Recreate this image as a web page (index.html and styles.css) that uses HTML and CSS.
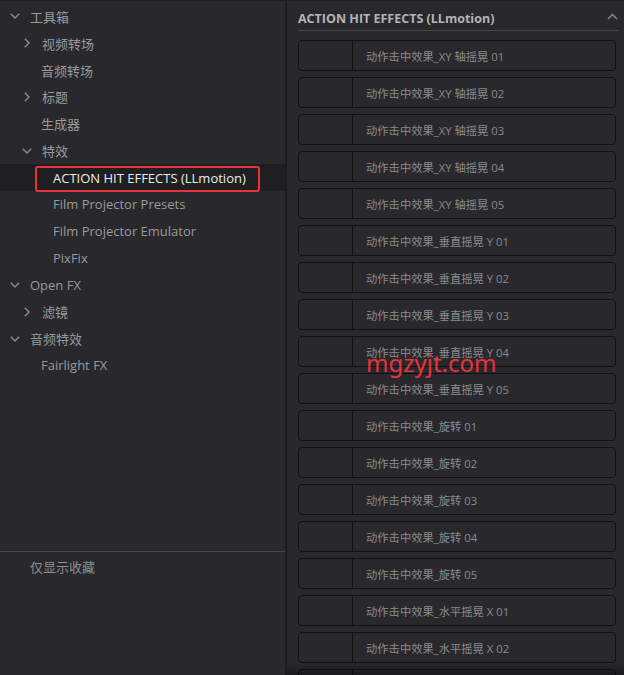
FILE: index.html
```html
<!DOCTYPE html>
<html lang="zh-CN">
<head>
<meta charset="utf-8">
<title>Effects Library</title>
<link rel="stylesheet" href="styles.css">
</head>
<body>
<div class="app">
  <aside class="side">
    <div class="tree">
      <div class="row l0"><span class="chev"><svg width="10" height="6" viewBox="0 0 10 6"><polyline points="0.8,0.8 5,5 9.2,0.8" /></svg></span><span class="label">工具箱</span></div>
      <div class="row l1"><span class="chev"><svg width="6" height="10" viewBox="0 0 6 10"><polyline points="0.8,0.8 5,5 0.8,9.2" /></svg></span><span class="label">视频转场</span></div>
      <div class="row leaf1"><span class="label">音频转场</span></div>
      <div class="row l1"><span class="chev"><svg width="6" height="10" viewBox="0 0 6 10"><polyline points="0.8,0.8 5,5 0.8,9.2" /></svg></span><span class="label">标题</span></div>
      <div class="row leaf1"><span class="label">生成器</span></div>
      <div class="row l1"><span class="chev"><svg width="10" height="6" viewBox="0 0 10 6"><polyline points="0.8,0.8 5,5 9.2,0.8" /></svg></span><span class="label">特效</span></div>
      <div class="row sel"><span class="label hl">ACTION HIT EFFECTS (LLmotion)</span></div>
      <div class="row l2"><span class="label">Film Projector Presets</span></div>
      <div class="row l2"><span class="label">Film Projector Emulator</span></div>
      <div class="row l2"><span class="label">PixFix</span></div>
      <div class="row l0"><span class="chev"><svg width="10" height="6" viewBox="0 0 10 6"><polyline points="0.8,0.8 5,5 9.2,0.8" /></svg></span><span class="label">Open FX</span></div>
      <div class="row l1"><span class="chev"><svg width="6" height="10" viewBox="0 0 6 10"><polyline points="0.8,0.8 5,5 0.8,9.2" /></svg></span><span class="label">滤镜</span></div>
      <div class="row l0"><span class="chev"><svg width="10" height="6" viewBox="0 0 10 6"><polyline points="0.8,0.8 5,5 9.2,0.8" /></svg></span><span class="label">音频特效</span></div>
      <div class="row leaf1"><span class="label">Fairlight FX</span></div>
    </div>
    <div class="foot"><span class="label">仅显示收藏</span></div>
  </aside>
  <div class="divider"></div>
  <main class="content">
    <div class="head">
      <span class="title">ACTION HIT EFFECTS (LLmotion)</span>
      <svg class="up" width="11" height="7" viewBox="0 0 11 7"><polyline points="1,6 5.5,1.5 10,6" /></svg>
    </div>
    <div class="list">
      <div class="card"><div class="thumb"></div><div class="name">动作击中效果_XY 轴摇晃 01</div></div>
      <div class="card"><div class="thumb"></div><div class="name">动作击中效果_XY 轴摇晃 02</div></div>
      <div class="card"><div class="thumb"></div><div class="name">动作击中效果_XY 轴摇晃 03</div></div>
      <div class="card"><div class="thumb"></div><div class="name">动作击中效果_XY 轴摇晃 04</div></div>
      <div class="card"><div class="thumb"></div><div class="name">动作击中效果_XY 轴摇晃 05</div></div>
      <div class="card"><div class="thumb"></div><div class="name">动作击中效果_垂直摇晃 Y 01</div></div>
      <div class="card"><div class="thumb"></div><div class="name">动作击中效果_垂直摇晃 Y 02</div></div>
      <div class="card"><div class="thumb"></div><div class="name">动作击中效果_垂直摇晃 Y 03</div></div>
      <div class="card"><div class="thumb"></div><div class="name">动作击中效果_垂直摇晃 Y 04</div></div>
      <div class="card"><div class="thumb"></div><div class="name">动作击中效果_垂直摇晃 Y 05</div></div>
      <div class="card"><div class="thumb"></div><div class="name">动作击中效果_旋转 01</div></div>
      <div class="card"><div class="thumb"></div><div class="name">动作击中效果_旋转 02</div></div>
      <div class="card"><div class="thumb"></div><div class="name">动作击中效果_旋转 03</div></div>
      <div class="card"><div class="thumb"></div><div class="name">动作击中效果_旋转 04</div></div>
      <div class="card"><div class="thumb"></div><div class="name">动作击中效果_旋转 05</div></div>
      <div class="card"><div class="thumb"></div><div class="name">动作击中效果_水平摇晃 X 01</div></div>
      <div class="card"><div class="thumb"></div><div class="name">动作击中效果_水平摇晃 X 02</div></div>
      <div class="card"><div class="thumb"></div><div class="name">动作击中效果_水平摇晃 X 03</div></div>
    </div>
  </main>
</div>
<div class="watermark">mgzyjt.com</div>
</body>
</html>
```
FILE: styles.css
```css
html, body {
  margin: 0;
  padding: 0;
  background: #28282d;
  overflow: hidden;
}
body {
  width: 624px;
  height: 675px;
  position: relative;
  font-family: "Open Sans", "Noto Sans CJK SC", sans-serif;
}
.app {
  display: flex;
  height: 675px;
  box-sizing: border-box;
  border-top: 1px solid #1f1f22;
}
.side {
  width: 285px;
  display: flex;
  flex-direction: column;
  background: #28282d;
}
.tree {
  flex: 1;
  padding-top: 2px;
}
.row {
  height: 26.85px;
  display: flex;
  align-items: center;
  font-size: 13px;
  color: #999a9c;
}
.chev {
  width: 14px;
  margin-right: 8px;
  display: flex;
  justify-content: center;
  align-items: center;
}
.chev svg polyline {
  fill: none;
  stroke: #8c8c8f;
  stroke-width: 1.4;
}
.l0 { padding-left: 8px; }
.l1 { padding-left: 20px; }
.leaf1 { padding-left: 41px; }
.l2 { padding-left: 53px; }
.sel {
  padding-left: 35px;
  background: #1f1f21;
}
.hl {
  box-sizing: border-box;
  height: 26px;
  margin-top: 3px;
  display: flex;
  align-items: center;
  padding: 0 12px 1px 16px;
  border: 2px solid #e8323a;
  border-radius: 3px;
  color: #ececec;
}
.foot {
  height: 124px;
  box-sizing: border-box;
  border-top: 1px solid #47474c;
  padding-left: 30px;
  padding-top: 2px;
  font-size: 13px;
  color: #8e8e90;
  line-height: 27px;
}
.divider {
  width: 2px;
  background: #1b1b1d;
}
.content {
  flex: 1;
  position: relative;
  overflow: hidden;
  padding-left: 11px;
  background: #28282d;
}
.content::after {
  content: "";
  position: absolute;
  left: 0;
  right: 0;
  bottom: 0;
  height: 12px;
  background: linear-gradient(to bottom, rgba(0,0,0,0), rgba(0,0,0,0.35));
}
.head {
  height: 24px;
  padding-top: 5px;
  margin-right: 5px;
  border-bottom: 1px solid #444449;
  display: flex;
  align-items: center;
  justify-content: space-between;
}
.title {
  font-size: 12.5px;
  font-weight: 700;
  color: #b4b4b7;
}
.up {
  margin-right: 1px;
  margin-top: -4px;
}
.up polyline {
  fill: none;
  stroke: #8a8a8d;
  stroke-width: 1.5;
}
.list {
  padding-top: 9px;
  margin-right: 8px;
}
.card {
  height: 31px;
  box-sizing: border-box;
  border: 1px solid #111113;
  border-radius: 4px;
  margin-bottom: 6px;
  display: flex;
  align-items: stretch;
}
.thumb {
  width: 53px;
  border-right: 1px solid #111113;
}
.name {
  padding-left: 13px;
  padding-top: 1px;
  display: flex;
  align-items: center;
  font-size: 11.3px;
  color: #8b8b8e;
  white-space: nowrap;
}
.watermark {
  position: absolute;
  left: 366px;
  top: 351px;
  font-family: "Noto Sans", sans-serif;
  font-size: 24px;
  line-height: 24px;
  color: #e8323c;
}
```
